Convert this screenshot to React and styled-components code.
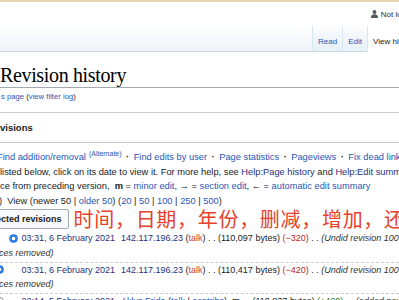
import React from 'react';
import styled, { createGlobalStyle } from 'styled-components';

const GlobalStyle = createGlobalStyle`
  html, body {
    margin: 0;
    padding: 0;
    background: #fff;
  }
  body {
    font-family: "Liberation Sans", Arial, sans-serif;
    color: #202122;
    overflow: hidden;
  }
`;

const Page = styled.div`
  width: 399px;
  height: 300px;
  overflow: hidden;
  display: flex;
  flex-direction: column;
`;

const Header = styled.div`
  border-top: 2px solid #e6d6ae;
  height: 50px;
  display: flex;
  flex-direction: column;
  flex: none;
  background: linear-gradient(to bottom, #fff 45%, #eef3f8 100%);
`;

const PersonalBar = styled.div`
  height: 24px;
  display: flex;
  justify-content: flex-end;
  align-items: center;
  gap: 3px;
  margin-right: -29px;
  font-size: 8px;
  color: #2c2e30;
  white-space: nowrap;
`;

const TabsRow = styled.div`
  flex: 1;
  display: flex;
  align-items: stretch;
  margin-right: -22px;
`;

const TabsFill = styled.div`
  flex: 1;
  border-bottom: 1px solid #c5d9e8;
`;

const Tab = styled.div`
  display: flex;
  align-items: flex-end;
  padding: 0 5px 4px;
  font-size: 8px;
  line-height: 10px;
  white-space: nowrap;
  color: ${p => (p.$selected ? '#202122' : '#2a56b5')};
  background: ${p =>
    p.$selected
      ? '#fff'
      : 'linear-gradient(to bottom, rgba(255,255,255,0) 0%, #e9f2f9 100%)'};
  border-bottom: 1px solid ${p => (p.$selected ? '#fff' : '#c5d9e8')};
  border-left: 1px solid #d6e6f2;
`;

const Content = styled.div`
  flex: 1;
  padding-top: 11px;
  overflow: hidden;
  font-size: 9.3px;
`;

const Title = styled.h1`
  margin: 0;
  font-family: "Liberation Serif", "Times New Roman", serif;
  font-weight: normal;
  font-size: 20px;
  letter-spacing: -0.35px;
  line-height: 24px;
  color: #000;
  border-bottom: 1px solid #a2a9b1;
  white-space: nowrap;
`;

const Logs = styled.div`
  margin-top: 4px;
  font-size: 7.7px;
  line-height: 10px;
  white-space: nowrap;
  padding-left: 1px;
`;

const Link = styled.span`
  color: ${p => (p.$visited ? '#262f7e' : p.$red ? '#c73c32' : '#2a56b5')};
`;

const FilterBox = styled.div`
  margin-top: 10px;
  border-top: 1px solid #c8ccd1;
  border-bottom: 1px solid #c8ccd1;
  padding: 8px 0 7px;
  font-size: 9.5px;
  line-height: 14px;
  font-weight: bold;
  color: #202122;
  white-space: nowrap;
`;

const Lines = styled.div`
  padding-top: 7px;
`;

const Line = styled.div`
  line-height: 14.5px;
  white-space: nowrap;
  margin-left: ${p => (p.$shift ? -p.$shift : 0)}px;
`;

const Sup = styled.sup`
  font-size: 7px;
  vertical-align: 4px;
  line-height: 0;
  margin-left: 3px;
`;

const Dot = styled.span`
  padding: 0 4.5px;
  font-weight: bold;
`;

const Bold = styled.b`
  font-weight: bold;
`;

const ButtonRow = styled.div`
  margin-top: 1px;
  display: flex;
  align-items: center;
  gap: 5px;
  margin-left: -65px;
  white-space: nowrap;
`;

const Button = styled.button`
  height: 20px;
  box-sizing: border-box;
  padding: 0 6px;
  border: 1px solid #a2a9b1;
  border-radius: 2px;
  background: #f8f9fa;
  font-family: "Liberation Sans", Arial, sans-serif;
  font-size: 9px;
  font-weight: bold;
  color: #202122;
  flex: none;
`;

const Note = styled.span`
  font-family: "Noto Sans CJK SC", sans-serif;
  font-size: 20px;
  line-height: 20px;
  letter-spacing: 0.7px;
  color: #e5412c;
`;

const List = styled.ul`
  list-style: none;
  margin: 2px 0 0 -5px;
  padding: 0;
  font-size: 9px;
`;

const Row = styled.li`
  border-bottom: 1px dashed #c8ccd1;
  padding-bottom: 1.5px;
`;

const RowMain = styled.div`
  height: 14.5px;
  display: flex;
  align-items: center;
  white-space: nowrap;
`;

const Radios = styled.span`
  display: flex;
  gap: 4.5px;
  margin-right: 4px;
  flex: none;
`;

const Radio = styled.span`
  width: 9px;
  height: 9px;
  box-sizing: border-box;
  border-radius: 50%;
  visibility: ${p => (p.$hidden ? 'hidden' : 'visible')};
  border: 1px solid ${p => (p.$checked ? '#2f7ae5' : '#8a8f96')};
  background: ${p =>
    p.$checked
      ? 'radial-gradient(circle, #fff 0 1.6px, #2f7ae5 2.1px)'
      : '#fff'};
`;

const DateLink = styled.span`
  color: #262f7e;
  margin-right: 6px;
`;

const Neg = styled.span`
  color: #b3261e;
`;

const Pos = styled.span`
  color: #1a7f1a;
`;

const Comment = styled.span`
  font-style: italic;
  color: #333;
`;

const SubLine = styled.div`
  line-height: 14.5px;
  white-space: nowrap;
  font-style: italic;
  color: #333;
  margin-left: 4px;
`;

function PersonIcon() {
  return (
    <svg width="7" height="8" viewBox="0 0 7 8">
      <circle cx="3.5" cy="2" r="1.9" fill="#555a60" />
      <path d="M0 8 C0 5 1.5 4.3 3.5 4.3 C5.5 4.3 7 5 7 8 Z" fill="#555a60" />
    </svg>
  );
}

const revisions = [
  {
    date: '03:31, 6 February 2021',
    user: '142.117.196.23',
    ip: true,
    bytes: '110,097',
    diff: '−320',
    summary: '(Undid revision 1004862113 by Aklys Frida',
    tail: 'ces removed)',
    radios: [false, true],
    hidden: [true, false],
  },
  {
    date: '03:31, 6 February 2021',
    user: '142.117.196.23',
    ip: true,
    bytes: '110,417',
    diff: '−420',
    summary: '(Undid revision 1004861774 by Aklys Frida',
    tail: 'ces removed)',
    radios: [true, false],
    hidden: [false, true],
  },
  {
    date: '22:14, 5 February 2021',
    user: 'Aklys Frida',
    ip: false,
    bytes: '110,837',
    diff: '+420',
    summary: '(added new section)',
    tail: '',
    radios: [false, false],
    hidden: [false, true],
  },
];

function RevisionRow({ rev }) {
  return (
    <Row>
      <RowMain>
        <Radios>
          <Radio $checked={rev.radios[0]} $hidden={rev.hidden[0]} />
          <Radio $checked={rev.radios[1]} $hidden={rev.hidden[1]} />
        </Radios>
        <span>
          <DateLink>{rev.date}</DateLink>
          {rev.ip ? (
            <>
              <Link $visited>{rev.user}</Link> (<Link $red>talk</Link>)
            </>
          ) : (
            <>
              <Link>{rev.user}</Link> (<Link>talk</Link> | <Link>contribs</Link>)
              {'\u00a0 '}
              <Bold>m</Bold>
            </>
          )}
          {' . . ('}
          {rev.bytes} bytes){' '}
          {rev.diff.startsWith('+') ? <Pos>({rev.diff})</Pos> : <Neg>({rev.diff})</Neg>}
          {' . . '}
          <Comment>{rev.summary}</Comment>
        </span>
      </RowMain>
      <SubLine>{rev.tail}</SubLine>
    </Row>
  );
}

export default function App() {
  return (
    <Page>
      <GlobalStyle />
      <Header>
        <PersonalBar>
          <PersonIcon />
          <span>Not logged in</span>
        </PersonalBar>
        <TabsRow>
          <TabsFill />
          <Tab>Read</Tab>
          <Tab>Edit</Tab>
          <Tab $selected>View history</Tab>
        </TabsRow>
      </Header>
      <Content>
        <Title>Revision history</Title>
        <Logs>
          <Link>s page</Link> (<Link>view filter log</Link>)
        </Logs>
        <FilterBox>visions</FilterBox>
        <Lines>
          <Line $shift={3}>
            <Link>Find addition/removal</Link>
            <Sup>
              <Link>(Alternate)</Link>
            </Sup>
            <Dot>·</Dot>
            <Link>Find edits by user</Link>
            <Dot>·</Dot>
            <Link>Page statistics</Link>
            <Dot>·</Dot>
            <Link>Pageviews</Link>
            <Dot>·</Dot>
            <Link>Fix dead links</Link>
          </Line>
          <Line>
            listed below, click on its date to view it. For more help, see{' '}
            <Link $visited>Help:Page history</Link> and <Link $visited>Help:Edit summary</Link>.
          </Line>
          <Line>
            ce from preceding version,&nbsp; <Bold>m</Bold> = <Link>minor edit</Link>, → ={' '}
            <Link>section edit</Link>, ← = <Link>automatic edit summary</Link>
          </Line>
          <Line $shift={1}>
            )&nbsp; View (newer 50 | <Link>older 50</Link>) (<Link>20</Link> | <Link>50</Link> |{' '}
            <Link>100</Link> | <Link>250</Link> | <Link>500</Link>)
          </Line>
        </Lines>
        <ButtonRow>
          <Button>Compare selected revisions</Button>
          <Note>时间，日期，年份，删减，增加，还原</Note>
        </ButtonRow>
        <List>
          {revisions.map((rev, i) => (
            <RevisionRow key={i} rev={rev} />
          ))}
        </List>
      </Content>
    </Page>
  );
}
